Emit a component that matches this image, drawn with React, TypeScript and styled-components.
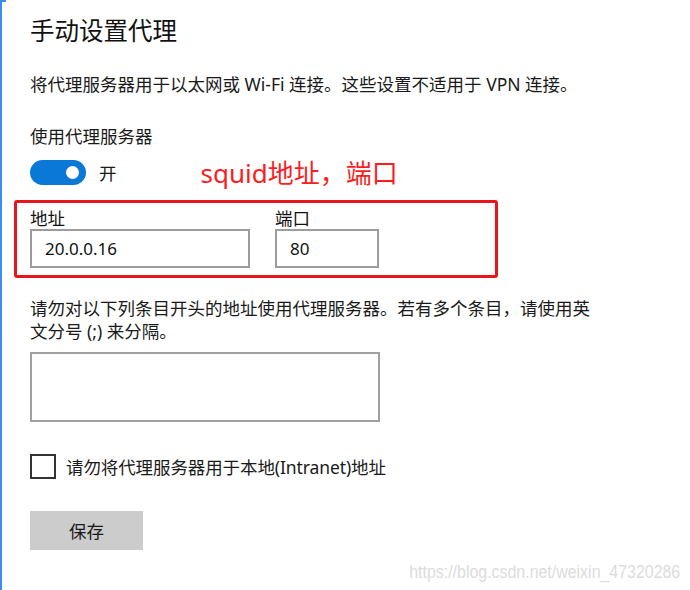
import React from "react";
import styled, { createGlobalStyle } from "styled-components";

const GlobalStyle = createGlobalStyle`
  html, body {
    margin: 0;
    padding: 0;
    background: #ffffff;
  }
  body {
    font-family: "Segoe UI", "Noto Sans", "Noto Sans CJK SC", sans-serif;
    color: #1a1a1a;
  }
  * { box-sizing: border-box; }
`;

const Page = styled.div`
  position: relative;
  width: 690px;
  height: 590px;
  overflow: hidden;
  border-left: 2px solid #3a8cf2;
  padding: 13px 0 0 28px;
  display: flex;
  flex-direction: column;
  align-items: flex-start;
  &::before {
    content: "";
    position: absolute;
    top: 0;
    left: 0;
    width: 4px;
    height: 2px;
    background: #3a8cf2;
  }
`;

const Title = styled.h1`
  margin: 0;
  font-size: 24.5px;
  font-weight: 400;
  line-height: 34px;
  height: 34px;
  color: #111;
  font-family: "Noto Sans CJK SC", sans-serif;
`;

const Text = styled.p<{ $top: number }>`
  margin: ${(p) => p.$top}px 0 0 0;
  font-size: 17.5px;
  line-height: 24px;
  color: #1a1a1a;
  white-space: nowrap;
`;

const Paragraph = styled.p`
  margin: 19px 0 0 0;
  width: 566px;
  font-size: 17.5px;
  line-height: 23px;
  color: #1a1a1a;
`;

const ToggleRow = styled.div`
  margin-top: 12px;
  height: 25px;
  display: flex;
  align-items: center;
`;

const Toggle = styled.div`
  position: relative;
  width: 56px;
  height: 25px;
  border-radius: 13px;
  background: #0a78d7;
  &::after {
    content: "";
    position: absolute;
    top: 6px;
    right: 7px;
    width: 13px;
    height: 13px;
    border-radius: 50%;
    background: #ffffff;
  }
`;

const ToggleLabel = styled.span`
  margin-left: 13px;
  font-size: 17.5px;
  line-height: 24px;
  color: #1a1a1a;
`;

const Annotation = styled.span`
  margin-left: 84px;
  font-size: 26px;
  line-height: 30px;
  color: #fa1e22;
  font-family: "Noto Sans", "Noto Sans CJK SC", sans-serif;
`;

const HighlightBox = styled.div`
  margin: 15px 0 0 -16px;
  width: 484px;
  border: 3px solid #e8151d;
  border-radius: 3px;
  padding: 4px 0 7px 13px;
  display: flex;
  gap: 25px;
`;

const Field = styled.div<{ $width: number }>`
  width: ${(p) => p.$width}px;
  display: flex;
  flex-direction: column;
`;

const FieldLabel = styled.label`
  font-size: 17.5px;
  line-height: 22px;
  height: 22px;
  color: #111;
`;

const Input = styled.div`
  height: 39px;
  border: 2px solid #9c9c9c;
  padding-left: 13px;
  display: flex;
  align-items: center;
  font-size: 17px;
  color: #111;
`;

const TextArea = styled.div`
  margin-top: 9px;
  width: 350px;
  height: 70px;
  border: 2px solid #a0a0a0;
  background: #fff;
`;

const CheckRow = styled.div`
  margin-top: 32px;
  height: 25px;
  display: flex;
  align-items: center;
  gap: 10px;
`;

const CheckBox = styled.div`
  width: 26px;
  height: 25px;
  border: 2px solid #333333;
  background: #fff;
`;

const CheckLabel = styled.span`
  font-size: 17.5px;
  line-height: 24px;
  color: #1a1a1a;
  letter-spacing: -0.1px;
`;

const Button = styled.button`
  margin-top: 32px;
  width: 113px;
  height: 39px;
  border: none;
  background: #cccccc;
  font-family: inherit;
  font-size: 17.5px;
  color: #1a1a1a;
  padding: 0;
  display: flex;
  align-items: center;
  justify-content: center;
`;

const Watermark = styled.span`
  position: absolute;
  right: 10px;
  bottom: 8px;
  font-family: "Liberation Sans", Arial, sans-serif;
  font-size: 18px;
  line-height: 20px;
  color: #dcdcdc;
  transform: scaleX(0.885);
  transform-origin: right center;
  white-space: nowrap;
`;

export default function App() {
  return (
    <>
      <GlobalStyle />
      <Page>
        <Title>手动设置代理</Title>
        <Text $top={25}>将代理服务器用于以太网或 Wi-Fi 连接。这些设置不适用于 VPN 连接。</Text>
        <Text $top={28}>使用代理服务器</Text>
        <ToggleRow>
          <Toggle />
          <ToggleLabel>开</ToggleLabel>
          <Annotation>squid地址，端口</Annotation>
        </ToggleRow>
        <HighlightBox>
          <Field $width={220}>
            <FieldLabel>地址</FieldLabel>
            <Input>20.0.0.16</Input>
          </Field>
          <Field $width={104}>
            <FieldLabel>端口</FieldLabel>
            <Input>80</Input>
          </Field>
        </HighlightBox>
        <Paragraph>
          请勿对以下列条目开头的地址使用代理服务器。若有多个条目，请使用英文分号 (;) 来分隔。
        </Paragraph>
        <TextArea />
        <CheckRow>
          <CheckBox />
          <CheckLabel>请勿将代理服务器用于本地(Intranet)地址</CheckLabel>
        </CheckRow>
        <Button>保存</Button>
        <Watermark>https://blog.csdn.net/weixin_47320286</Watermark>
      </Page>
    </>
  );
}
